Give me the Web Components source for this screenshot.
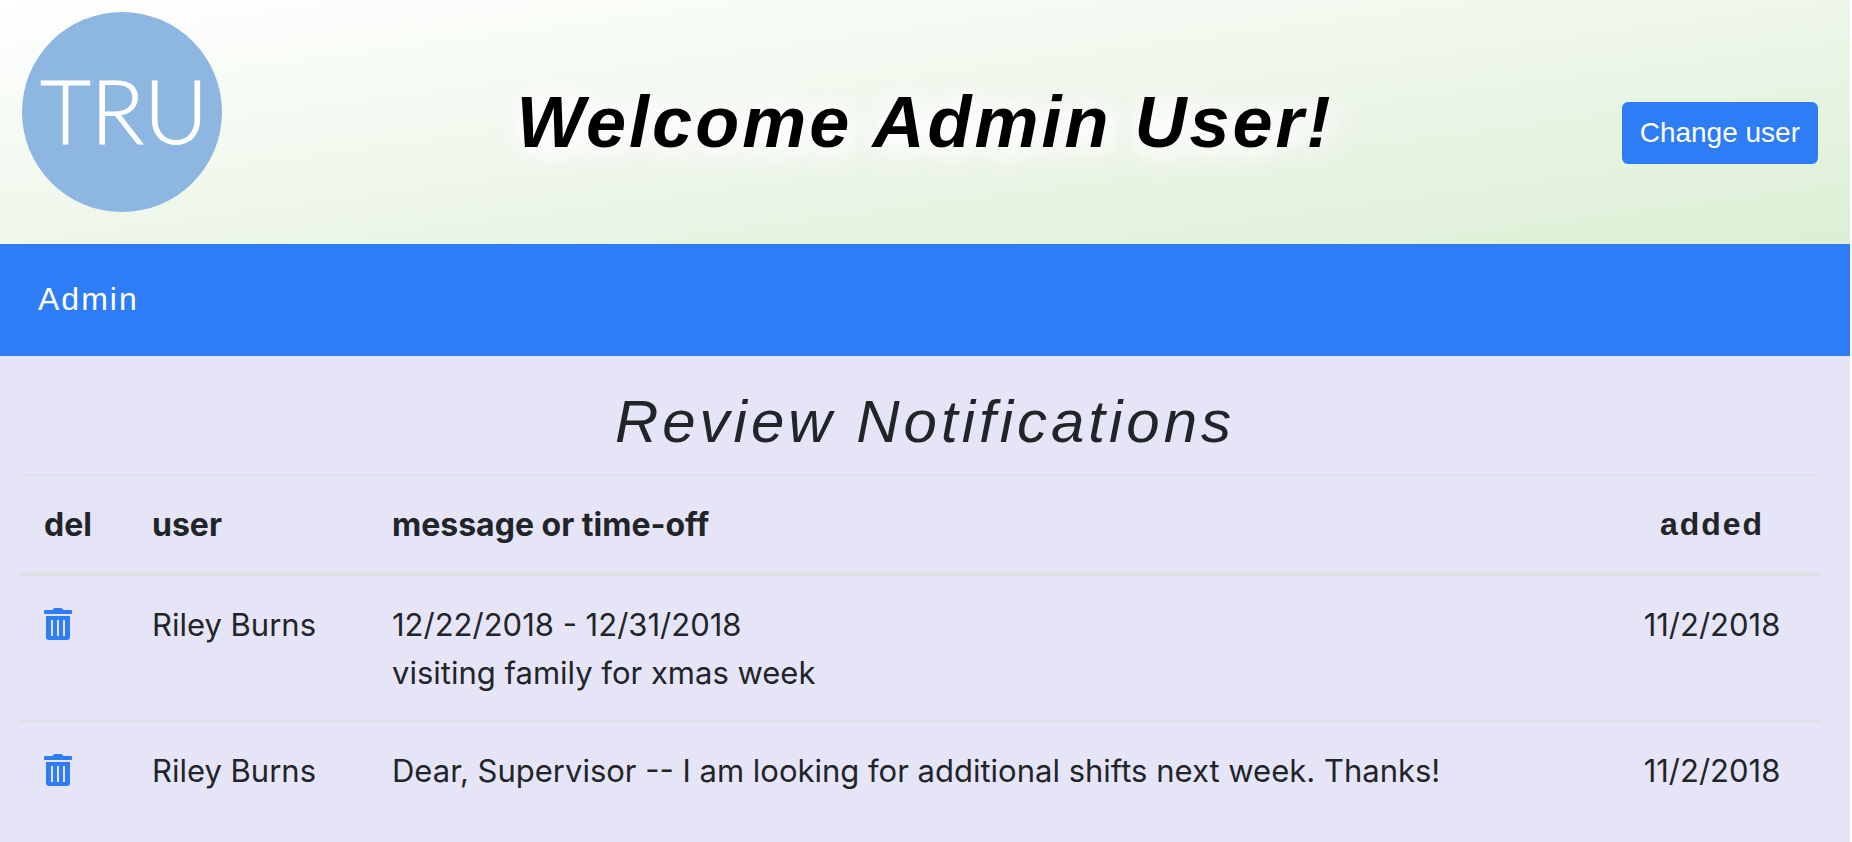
<!DOCTYPE html>
<html lang="en">
<head>
<meta charset="utf-8">
<title>Review Notifications</title>
<style>
  html { background: #fff; }
  body { margin: 0 2px 0 0; min-height: 100vh; background: #e6e5f7; color: #212529; font: 32px/48px Inter, sans-serif; --blue: #2f7df6; --rule: #dfe2e5; --brand: "Liberation Sans", Arial, sans-serif; }
</style>
</head>
<body>
<admin-app></admin-app>
<script>
const define = (name, html) => customElements.define(name, class extends HTMLElement {
  constructor() {
    super();
    this.attachShadow({ mode: "open" }).innerHTML = html;
  }
});

define("tru-logo", `
  <style>
    :host { display: block; }
    a { display: grid; place-items: center; box-sizing: border-box; width: 200px; height: 200px; padding: 0 0 4px 4px; border-radius: 50%; background: #8db7e0; color: #fff; font: 300 88px/88px Lato, sans-serif; -webkit-text-stroke: 1px #fff; text-decoration: none; }
  </style>
  <a href="#">TRU</a>`);

define("primary-button", `
  <style>
    :host { display: block; }
    button { display: block; border: 0; border-radius: 6px; padding: 10px 18px; background: var(--blue); color: #fff; font: 28px/42px var(--brand); cursor: pointer; }
  </style>
  <button type="button"><slot></slot></button>`);

define("page-header", `
  <style>
    :host { display: grid; grid-template-columns: 1fr auto 1fr; align-items: center; padding: 12px 22px 32px; background: linear-gradient(to bottom right, #fff, #eaf5e5 62%, #dcefd5); }
    h1 { margin: 0; color: #000; font: italic bold 72px/86px var(--brand); letter-spacing: 3px; text-shadow: 4px 4px 40px #fff, 4px 4px 40px #fff, 0 0 40px #fff, 2px 2px 20px #fff; padding-top: 20px; }
    primary-button { justify-self: end; padding: 42px 10px 0 0; }
  </style>
  <tru-logo></tru-logo>
  <h1><slot></slot></h1>
  <primary-button>Change user</primary-button>`);

define("nav-bar", `
  <style>
    :host { display: block; padding: 31px 38px 33px; background: var(--blue); }
    a { color: #fff; font-family: var(--brand); letter-spacing: 2px; text-decoration: none; }
  </style>
  <nav><a href="#"><slot></slot></a></nav>`);

define("trash-icon", `
  <style>
    :host { display: block; }
    button { display: block; border: 0; padding: 7px 0 9px; background: none; cursor: pointer; }
    svg { display: block; fill: var(--blue); }
  </style>
  <button type="button" aria-label="Delete notification">
    <svg width="28" height="32" viewBox="0 0 28 32">
      <path d="M1 2H8.500Q9.500 0 11 0H17Q18.500 0 19.500 2H27Q28 2 28 3V5Q28 6 27 6H1Q0 6 0 5V3Q0 2 1 2Z"/>
      <path fill-rule="evenodd" d="M2 8H26V29Q26 32 23 32H5Q2 32 2 29ZM7 12V28H9V12ZM13 12V28H15V12ZM19 12V28H21V12Z"/>
    </svg>
  </button>`);

define("notification-table", `
  <style>
    :host { display: block; }
    table { width: 100%; table-layout: fixed; border-collapse: separate; border-spacing: 0; }
    th, td { padding: 25px 24px 23px; border-top: 2px solid var(--rule); text-align: left; vertical-align: top; }
    td { font-size: 31px; }
    thead th { border-bottom: 4px solid var(--rule); }
    tbody tr:first-child td { border-top: 0; }
    .del { width: 60px; }
    .user { width: 192px; }
    .added { width: 168px; }
    th:last-child, td:last-child { text-align: center; }
    thead th:last-child { padding: 24px; font-family: var(--brand); letter-spacing: 2px; }
    p { margin: 0; }
  </style>
  <table>
    <thead><tr><th class="del">del</th><th class="user">user</th><th>message or time-off</th><th class="added">added</th></tr></thead>
    <tbody>
      <tr><td><trash-icon></trash-icon></td><td>Riley Burns</td><td><p>12/22/2018 - 12/31/2018</p><p>visiting family for xmas week</p></td><td>11/2/2018</td></tr>
      <tr><td><trash-icon></trash-icon></td><td>Riley Burns</td><td><p>Dear, Supervisor -- I am looking for additional shifts next week. Thanks!</p></td><td>11/2/2018</td></tr>
    </tbody>
  </table>`);

define("admin-app", `
  <style>
    :host { display: block; }
    main { padding: 30px 0 24px; }
    h2 { margin: 0 0 16px; font: italic 60px/72px var(--brand); letter-spacing: 4px; text-align: center; }
    notification-table { margin: 0 30px 0 20px; }
  </style>
  <page-header>Welcome Admin User!</page-header>
  <nav-bar>Admin</nav-bar>
  <main>
    <h2>Review Notifications</h2>
    <notification-table></notification-table>
  </main>`);
</script>
</body>
</html>
